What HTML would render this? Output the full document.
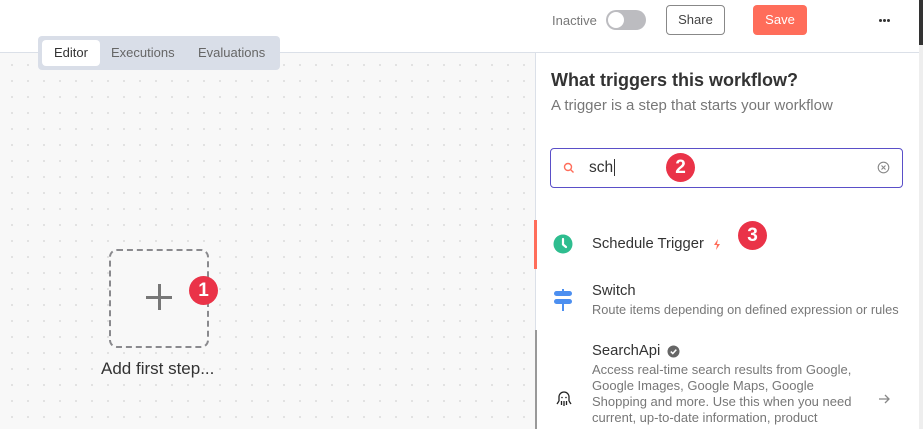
<!DOCTYPE html>
<html><head><style>
*{box-sizing:border-box;margin:0;padding:0}
body{width:923px;height:429px;overflow:hidden;font-family:"Liberation Sans",sans-serif;background:#f8f8f8;position:relative;color:#333}
.hdr{position:absolute;left:0;top:0;width:919px;height:53px;background:#fff;border-bottom:1px solid #dbe0e8}
.canvas{position:absolute;left:0;top:53px;width:535px;height:376px;background-color:#f8f8f8;background-image:radial-gradient(circle,#cfcfcf 0.7px,transparent 0.9px);background-size:16px 16px;background-position:4px 4px}
.abs{position:absolute}
.badge{position:absolute;width:29px;height:29px;border-radius:50%;background:#ea3348;color:#fff;font-weight:bold;font-size:19px;text-align:center;line-height:29px}
.panel{position:absolute;left:535px;top:53px;width:384px;height:376px;background:#fff;border-left:1px solid #dbe0e8}
.strip{position:absolute;left:919px;top:0;width:4px;height:429px;background:#eee}
.dot{position:absolute;width:3px;height:3px;border-radius:50%;background:#333;top:19px}
</style></head><body>
<div class="hdr"></div>
<div class="strip"><div style="width:4px;height:45px;background:#333"></div></div>
<div class="abs" style="left:552px;top:13px;font-size:13px;color:#777">Inactive</div>
<div class="abs" style="left:606px;top:10px;width:40px;height:20px;border-radius:10px;background:#bcbcc0"><div style="position:absolute;left:2px;top:2px;width:16px;height:16px;border-radius:50%;background:#fff"></div></div>
<div class="abs" style="left:666px;top:5px;width:59px;height:30px;border:1px solid #888;border-radius:4px;font-size:13px;text-align:center;line-height:28px;color:#444">Share</div>
<div class="abs" style="left:753px;top:5px;width:54px;height:30px;border-radius:4px;background:#ff6d5a;color:#fff;font-size:13px;text-align:center;line-height:30px">Save</div>
<div class="dot" style="left:879px"></div><div class="dot" style="left:883px"></div><div class="dot" style="left:887px"></div>
<div class="canvas"></div>
<div class="abs" style="left:38px;top:36px;width:242px;height:34px;background:#d9dee8;border-radius:4px"></div>
<div class="abs" style="left:42px;top:40px;width:58px;height:26px;background:#fff;border-radius:4px"></div>
<div class="abs" style="left:54px;top:45px;font-size:13px;color:#333">Editor</div>
<div class="abs" style="left:111px;top:45px;font-size:13px;color:#666">Executions</div>
<div class="abs" style="left:198px;top:45px;font-size:13px;color:#666">Evaluations</div>
<div class="abs" style="left:109px;top:249px;width:100px;height:99px;border:2px dashed #8a8a8e;border-radius:8px;background:#f8f8f8"></div>
<div class="abs" style="left:146px;top:296px;width:26px;height:3px;background:#777"></div>
<div class="abs" style="left:157.5px;top:284px;width:3px;height:26px;background:#777"></div>
<div class="badge" style="left:189px;top:276px">1</div>
<div class="abs" style="left:101px;top:359px;font-size:17px;color:#333">Add first step...</div>
<div class="panel"></div>
<div class="abs" style="left:551px;top:70px;font-size:18px;font-weight:bold;color:#333">What triggers this workflow?</div>
<div class="abs" style="left:551px;top:97px;font-size:15px;color:#777">A trigger is a step that starts your workflow</div>
<div class="abs" style="left:550px;top:148px;width:353px;height:40px;border:1px solid #5a4fc8;border-radius:4px"></div>
<svg class="abs" style="left:563px;top:162px" width="12" height="12" viewBox="0 0 12 12"><circle cx="5" cy="5" r="3.5" fill="none" stroke="#ff6d5a" stroke-width="1.4"/><path d="M7.6 7.6L10.5 10.5" stroke="#ff6d5a" stroke-width="1.4"/></svg>
<div class="abs" style="left:589px;top:159px;font-size:15.5px;color:#333">sch<span style="border-left:1px solid #333;margin-left:1px"></span></div>
<div class="badge" style="left:666px;top:153px">2</div>
<svg class="abs" style="left:877px;top:161px" width="13" height="13" viewBox="0 0 13 13"><circle cx="6.5" cy="6.5" r="5.3" fill="none" stroke="#888" stroke-width="1.1"/><path d="M4.5 4.5L8.5 8.5M8.5 4.5L4.5 8.5" stroke="#888" stroke-width="1.1"/></svg>
<div class="abs" style="left:534px;top:220px;width:3px;height:49px;background:#ff6d5a"></div>
<svg class="abs" style="left:553px;top:234px" width="20" height="20" viewBox="0 0 20 20"><circle cx="10" cy="10" r="9.5" fill="#2ebd8f"/><path d="M10 5V10.5L13 13" stroke="#fff" stroke-width="2.2" fill="none" stroke-linecap="round"/></svg>
<div class="abs" style="left:592px;top:236px;font-size:14.8px;color:#333">Schedule Trigger</div>
<svg class="abs" style="left:712px;top:239px" width="10" height="11" viewBox="0 0 10 11"><path d="M6 0L2 6H5L4 11L8 5H5Z" fill="#ff6d5a"/></svg>
<div class="badge" style="left:738px;top:221px">3</div>
<svg class="abs" style="left:553px;top:289px" width="20" height="22" viewBox="0 0 20 22"><rect x="1" y="2" width="18" height="5" rx="2.5" fill="#4c8ff0"/><rect x="1" y="10" width="18" height="5" rx="2.5" fill="#4c8ff0"/><rect x="9" y="0" width="2" height="22" fill="#4c8ff0"/><rect x="0" y="7" width="20" height="3" fill="#fff"/></svg>
<div class="abs" style="left:592px;top:283px;font-size:14.8px;color:#333">Switch</div>
<div class="abs" style="left:592px;top:302px;font-size:12.8px;color:#777">Route items depending on defined expression or rules</div>
<div class="abs" style="left:535px;top:330px;width:2px;height:99px;background:#999"></div>
<div class="abs" style="left:592px;top:343px;font-size:14.8px;color:#333">SearchApi</div>
<svg class="abs" style="left:667px;top:345px" width="13" height="13" viewBox="0 0 13 13"><circle cx="6.5" cy="6.5" r="6" fill="#666"/><path d="M3.8 6.6L5.8 8.5L9.3 4.6" stroke="#fff" stroke-width="1.5" fill="none"/></svg>
<div class="abs" style="left:592px;top:362px;width:265px;font-size:13px;line-height:16px;color:#777">Access real-time search results from Google, Google Images, Google Maps, Google Shopping and more. Use this when you need current, up-to-date information, product</div>
<svg class="abs" style="left:555px;top:391px" width="18" height="18" viewBox="0 0 18 18"><path d="M4 10V6A5 5 0 0 1 14 6V10M4 10L2 13M6.5 10V14M11.5 10V14M14 10L16 13M9 10V15" stroke="#222" stroke-width="1.3" fill="none"/><circle cx="7" cy="6.5" r="0.8" fill="#222"/><circle cx="11" cy="6.5" r="0.8" fill="#222"/></svg>
<svg class="abs" style="left:878px;top:393px" width="13" height="12" viewBox="0 0 13 12"><path d="M1 6H11M7 2L11 6L7 10" stroke="#888" stroke-width="1.3" fill="none"/></svg>
</body></html>
